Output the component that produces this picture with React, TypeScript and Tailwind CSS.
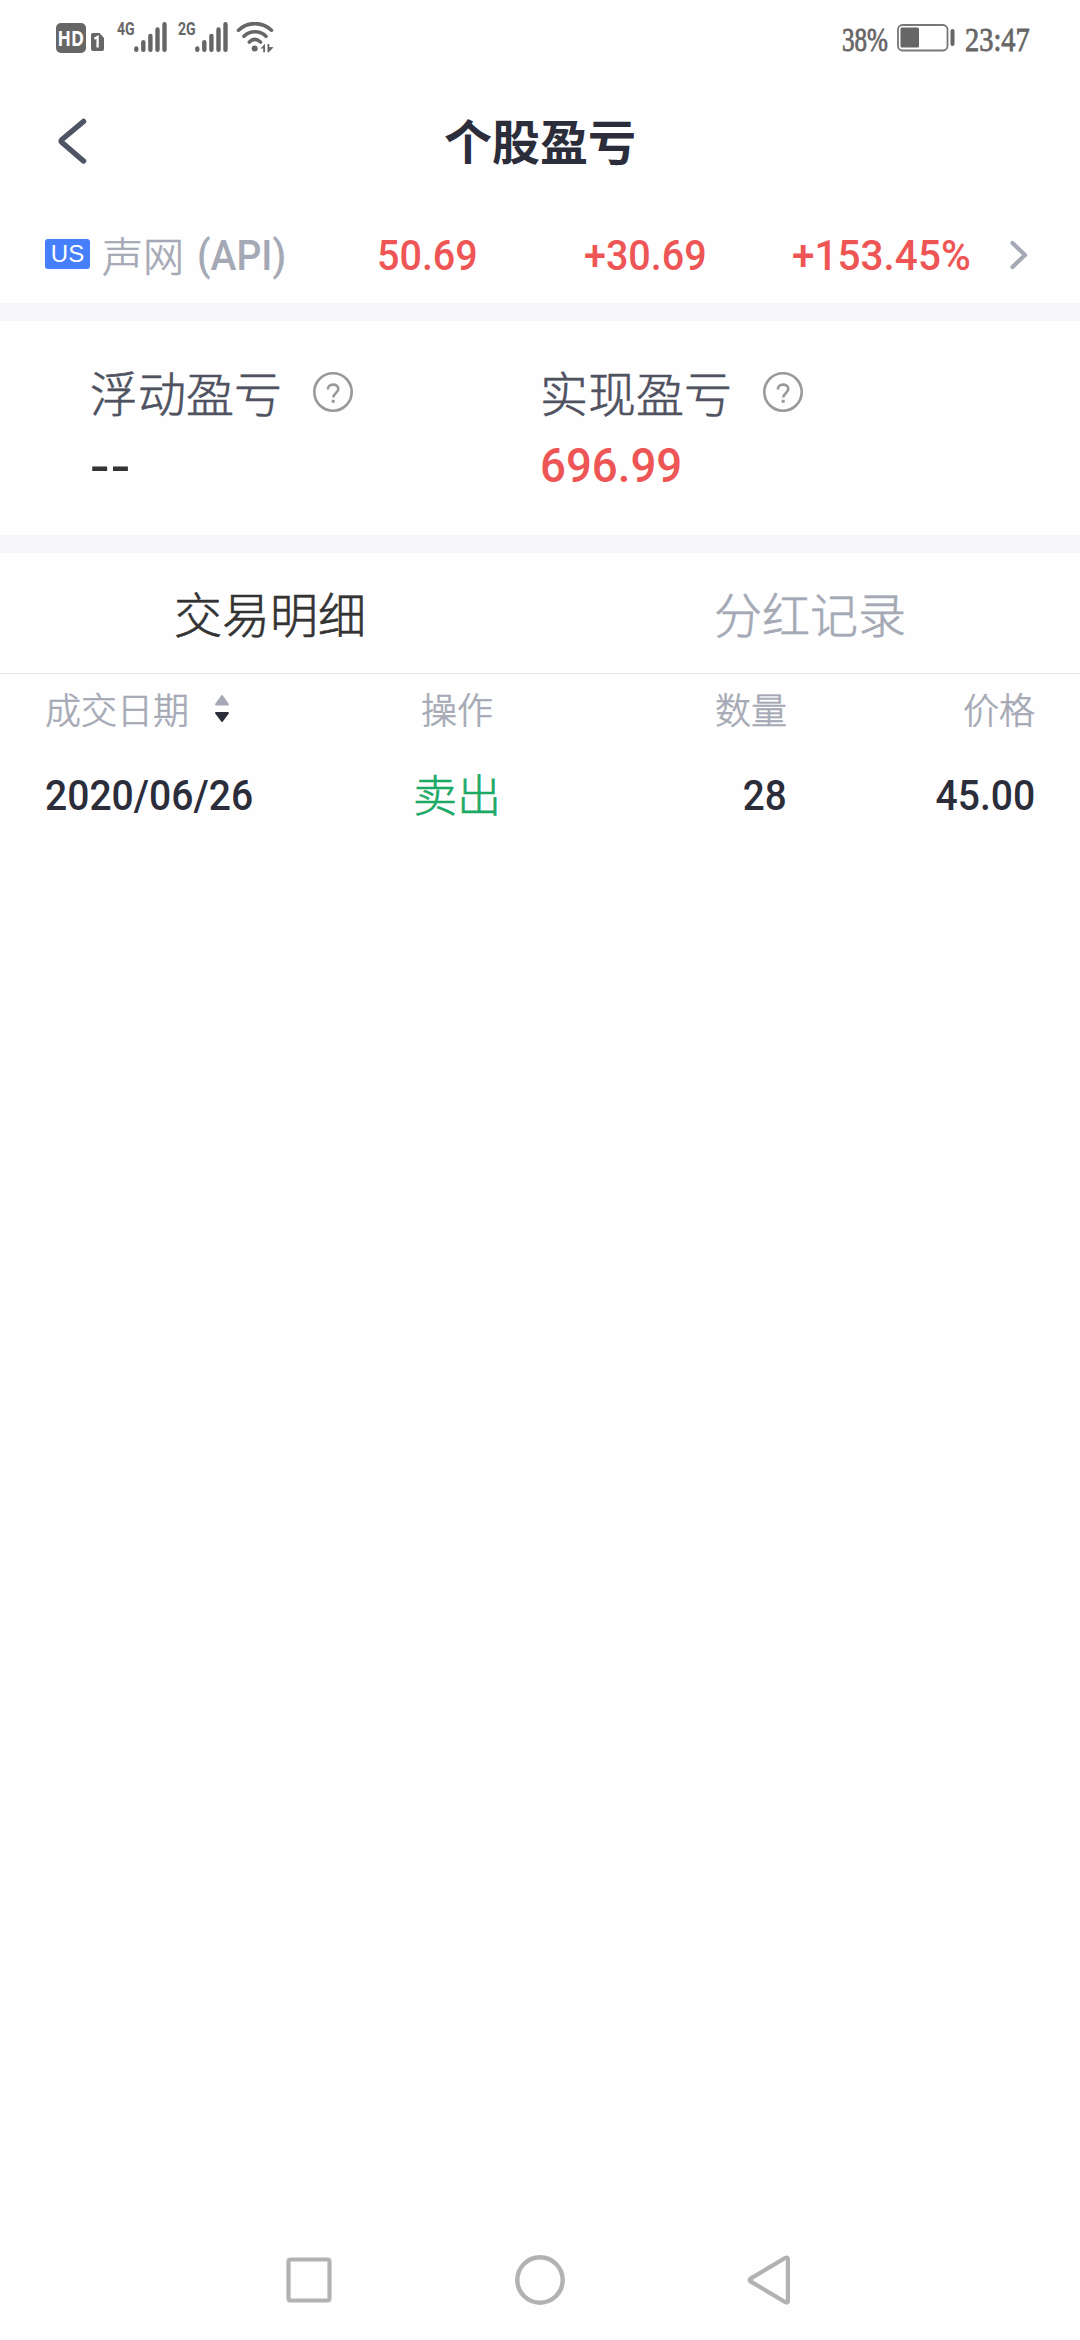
import type { ReactNode } from "react";

const cjk = "font-['Noto_Sans_CJK_SC',sans-serif]";
const thin = "font-light [-webkit-text-stroke:0.6px_currentColor]";
const din = "font-['Roboto','Noto_Sans_CJK_SC',sans-serif]";

function SignalBars() {
  return (
    <svg className="h-[30px] w-[33px]" viewBox="0 0 33 30" stroke="#666" strokeWidth="4.4" strokeLinecap="round">
      <path d="M2.3 26.4v1.3M9.3 20.2v7.5M16.4 14v13.7M23.5 7.5v20.2M30.5 2.3v25.4" />
    </svg>
  );
}

function StatusBar() {
  return (
    <div className="flex h-[75px] items-start pl-14 pr-[52px] pt-[22px] text-[#666]">
      <div className="mt-px flex h-[30px] w-[30px] items-center justify-center rounded-[5px] bg-[#666]">
        <span className="scale-x-[0.84] font-['Open_Sans',sans-serif] text-[21px] font-bold leading-none text-white">HD</span>
      </div>
      <svg className="ml-[5px] mt-[11px] h-[18px] w-[13px]" viewBox="0 0 13 18">
        <path d="M2 0h6.5L13 5v11a2 2 0 0 1-2 2H2a2 2 0 0 1-2-2V2a2 2 0 0 1 2-2z" fill="#666" />
        <path d="M3.4 5.8L6.6 4v10.5" fill="none" stroke="#fff" strokeWidth="2.3" />
      </svg>
      <div className="ml-[13px] w-[17px]">
        <span className="block origin-left scale-x-[0.74] font-['Roboto',sans-serif] text-[19px] font-bold leading-[14px]">4G</span>
      </div>
      <SignalBars />
      <div className="ml-[11px] w-[17px]">
        <span className="block origin-left scale-x-[0.74] font-['Roboto',sans-serif] text-[19px] font-bold leading-[14px]">2G</span>
      </div>
      <SignalBars />
      <svg className="ml-[8px] h-[31px] w-[38px]" viewBox="0 0 38 31" fill="none" stroke="#666" strokeWidth="3.6" strokeLinecap="round">
        <path d="M2.5 8.2C11.5-.6 26-.6 35.500 8.200M8 14.300c6-6 16-6 22 0M13.300 20c3.400-3.200 7.600-3.200 11.200 0" />
        <circle cx="18.700" cy="26.500" r="3" fill="#666" stroke="none" />
        <path d="M24.500 26.500l4.500-4.800v8.500h-1.800v-3.700zM31.500 22h1.800v3l4.300.2-4.800 5h-1.300z" fill="#666" stroke="none" />
      </svg>
      <div className="ml-auto w-[54px]">
        <span className="block origin-left scale-x-[0.76] whitespace-nowrap font-['Liberation_Serif',serif] text-[33px] leading-[37px] [-webkit-text-stroke:0.8px_#666]">38%</span>
      </div>
      <svg className="mt-px h-[30px] w-[60px]" viewBox="0 0 60 30">
        <rect x="2" y="2" width="49.500" height="25.500" rx="4.500" fill="none" stroke="#777" strokeWidth="1.800" />
        <rect x="4.500" y="4.500" width="18.500" height="20" rx="1.500" fill="#666" />
        <rect x="54.500" y="6" width="4" height="17" rx="2" fill="#666" />
      </svg>
      <div className="ml-[9px] w-[63px]">
        <span className="block origin-left scale-x-[0.86] whitespace-nowrap font-['Liberation_Serif',serif] text-[33px] leading-[37px] [-webkit-text-stroke:0.8px_#666]">23:47</span>
      </div>
    </div>
  );
}

function Help() {
  return (
    <svg className="h-10 w-10" viewBox="0 0 40 40" fill="none" stroke="#999" strokeWidth="2.600">
      <circle cx="20" cy="20" r="18.700" />
      <path d="M14.800 17.500c0-3.200 2.200-4.900 5.200-4.900s5.300 1.700 5.300 4.400c0 3.900-5 4-5 8.600" />
      <path d="M20.200 27.800v3" strokeWidth="3" />
    </svg>
  );
}

function Metric({ label, children }: { label: string; children: ReactNode }) {
  return (
    <div className="w-[450px]">
      <div className="flex h-[70px] items-center">
        <span className={`${cjk} ${thin} mb-0.5 w-[223px] text-[48px] leading-[70px] text-[#4f5261]`}>{label}</span>
        <Help />
      </div>
      {children}
    </div>
  );
}

export default function App() {
  return (
    <div className="flex h-[2340px] w-[1080px] flex-col overflow-hidden bg-[#fefefe]">
      <StatusBar />
      <header className="grid h-[134px] grid-cols-[1fr_auto_1fr] items-center">
        <svg className="mb-0.5 ml-[57px] h-[46px] w-[30px]" viewBox="0 0 30 46" fill="none" stroke="#4f5465" strokeWidth="5.500" strokeLinecap="round" strokeLinejoin="round">
          <path d="M26.500 3.500L5 21.500q-1.800 1.500 0 3L26.500 43" />
        </svg>
        <h1 className={`${cjk} mb-[6px] text-[48px] font-bold leading-[70px] text-[#2b2d3b]`}>个股盈亏</h1>
      </header>

      <div className={`${din} flex h-[94px] items-center pl-[45px] text-[42px] font-medium leading-[60px] text-[#ee5555]`}>
        <div className="mb-1 flex h-[30px] w-[45px] items-center justify-center rounded-[3px] bg-[#467ffb] font-['Liberation_Sans',sans-serif] text-[24px] font-normal leading-[30px] text-white">US</div>
        <span className={`${cjk} ${thin} mb-1 ml-3 w-[95px] text-[41px] text-[#a5a9b5]`}>声网</span>
        <span className="w-[180px]"><span className="inline-block origin-left scale-x-[0.93] text-[#a5a9b5]">(API)</span></span>
        <span className="w-[207px]"><span className="inline-block origin-left scale-x-[0.94]">50.69</span></span>
        <span className="w-[208px]"><span className="inline-block origin-left scale-x-[0.94]">+30.69</span></span>
        <span className="w-[218px]"><span className="inline-block origin-left scale-x-[0.965]">+153.45%</span></span>
        <svg className="mb-0.5 h-[30px] w-[18px]" viewBox="0 0 18 30" fill="none" stroke="#a5a9b5" strokeWidth="4.200" strokeLinecap="round" strokeLinejoin="round">
          <path d="M2.500 3L15 15 2.500 27" />
        </svg>
      </div>
      <div className="h-[18px] bg-[#f6f6f9]" />

      <section className="flex h-[214px] pl-[90px] pt-9">
        <Metric label="浮动盈亏">
          <div className={`${din} text-[48px] font-medium leading-[79px] text-[#333]`}>
            <span className="inline-block origin-left scale-x-[1.2] tracking-[1px]">--</span>
          </div>
        </Metric>
        <Metric label="实现盈亏">
          <div className={`${din} text-[48px] font-medium leading-[77px] text-[#ee5555]`}>
            <span className="inline-block origin-left scale-x-[0.95]">696.99</span>
          </div>
        </Metric>
      </section>
      <div className="h-[18px] bg-[#f6f6f9]" />

      <nav className={`${cjk} ${thin} grid h-[121px] grid-cols-2 border-b border-[#e8e8e8] text-center text-[48px] leading-[118px]`}>
        <span className="text-[#333]">交易明细</span>
        <span className="text-[#a5a9b5]">分红记录</span>
      </nav>

      <div className={`${cjk} ${thin} grid h-[72px] grid-cols-[321px_182px_239px_248px] items-center pl-[45px] text-[36px] leading-[68px] text-[#a5a9b5]`}>
        <div className="mb-1 flex items-center gap-[25px]">
          成交日期
          <svg className="mt-0.5 h-[30px] w-[16px]" viewBox="0 0 16 30" strokeWidth="2" strokeLinejoin="round">
            <path d="M8 2L14 10.500H2z" fill="#a5a9b5" stroke="#a5a9b5" />
            <path d="M8 27L14 19H2z" fill="#2b2d3b" stroke="#2b2d3b" />
          </svg>
        </div>
        <span className="mb-1 text-center">操作</span>
        <span className="mb-1 text-right">数量</span>
        <span className="mb-1 text-right">价格</span>
      </div>

      <div className={`${din} grid h-[98px] grid-cols-[321px_182px_239px_248px] items-center pl-[45px] pt-0.5 text-[42px] font-medium leading-[60px] text-[#2b2d3b]`}>
        <span><span className="inline-block origin-left scale-x-[0.93]">2020/06/26</span></span>
        <span className={`${cjk} ${thin} mb-1.5 text-center text-[44px] text-[#1aaa66]`}>卖出</span>
        <span className="text-right"><span className="inline-block origin-right scale-x-[0.92]">28</span></span>
        <span className="text-right"><span className="inline-block origin-right scale-x-[0.93]">45.00</span></span>
      </div>

      <footer className="mt-auto flex h-[120px] items-center pl-[286px]">
        <svg className="h-[46px] w-[46px]" viewBox="0 0 46 46" fill="none" stroke="#b2b2b2" strokeWidth="4.200">
          <rect x="2.500" y="2.500" width="41" height="41" rx="2" />
        </svg>
        <svg className="ml-[183px] h-[50px] w-[50px]" viewBox="0 0 50 50" fill="none" stroke="#b2b2b2" strokeWidth="4.400">
          <circle cx="25" cy="25" r="22.700" />
        </svg>
        <svg className="ml-[182px] h-[50px] w-[44px]" viewBox="0 0 44 50" fill="none" stroke="#b2b2b2" strokeWidth="4.200" strokeLinejoin="round">
          <path d="M38.500 2.800L3.500 23.600q-1.800 1.400 0 2.800L38.500 47.200q2.200 1 2.400-1.200V4q-.2-2.200-2.400-1.200z" />
        </svg>
      </footer>
    </div>
  );
}
